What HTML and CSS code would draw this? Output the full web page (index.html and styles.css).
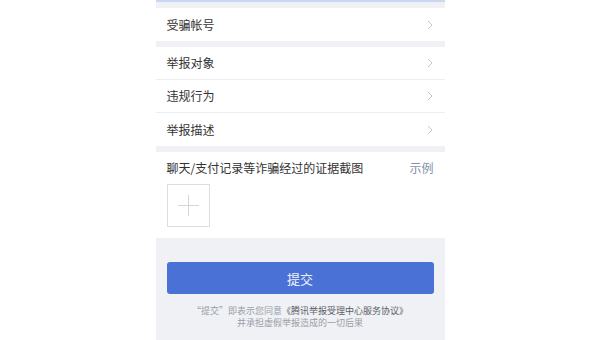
FILE: index.html
```html
<!DOCTYPE html>
<html lang="zh-CN">
<head>
<meta charset="utf-8">
<title>举报</title>
<link rel="stylesheet" href="styles.css">
</head>
<body>
<div class="phone">
  <div class="topline"></div>
  <div class="group first">
    <div class="row"><span class="label">受骗帐号</span><svg class="chev" width="6" height="10" viewBox="0 0 6 10"><polyline points="1,1 5,5 1,9" fill="none" stroke="#c4c6cc" stroke-width="1"/></svg></div>
  </div>
  <div class="group">
    <div class="row"><span class="label">举报对象</span><svg class="chev" width="6" height="10" viewBox="0 0 6 10"><polyline points="1,1 5,5 1,9" fill="none" stroke="#c4c6cc" stroke-width="1"/></svg></div>
    <div class="row"><span class="label">违规行为</span><svg class="chev" width="6" height="10" viewBox="0 0 6 10"><polyline points="1,1 5,5 1,9" fill="none" stroke="#c4c6cc" stroke-width="1"/></svg></div>
    <div class="row last"><span class="label">举报描述</span><svg class="chev" width="6" height="10" viewBox="0 0 6 10"><polyline points="1,1 5,5 1,9" fill="none" stroke="#c4c6cc" stroke-width="1"/></svg></div>
  </div>
  <div class="group evidence">
    <div class="ev-head"><span class="label">聊天/支付记录等诈骗经过的证据截图</span><span class="example">示例</span></div>
    <div class="upload">
      <svg width="25" height="25" viewBox="0 0 25 25"><line x1="12.5" y1="2" x2="12.5" y2="23" stroke="#d4d6da" stroke-width="1"/><line x1="2" y1="12.5" x2="23" y2="12.5" stroke="#d4d6da" stroke-width="1"/></svg>
    </div>
  </div>
  <div class="actions">
    <button class="submit">提交</button>
    <p class="note">“提交”即表示您同意<span class="agree">《腾讯举报受理中心服务协议》</span><br>并承担虚假举报造成的一切后果</p>
  </div>
</div>
</body>
</html>
```

FILE: styles.css
```css
html, body {
  margin: 0;
  padding: 0;
  background: #ffffff;
}
body {
  font-family: "Noto Sans CJK SC", "Noto Sans", sans-serif;
  color: #333;
}
.phone {
  width: 289px;
  height: 340px;
  margin: 0 auto;
  background: #eff1f5;
  overflow: hidden;
}
.topline {
  height: 2px;
  background: #c9d8f2;
}
.group {
  background: #fff;
  margin-top: 6px;
}
.row {
  height: 32px;
  display: flex;
  align-items: center;
  justify-content: space-between;
  padding: 0 12px 0 11px;
  border-bottom: 1px solid #eceef1;
}
.group.first .row {
  height: 33px;
  border-bottom: none;
}
.row.last {
  border-bottom: none;
  height: 33px;
}
.label {
  font-size: 12px;
  color: #333;
  line-height: 1;
}
.chev {
  display: block;
}
.evidence {
  padding: 9px 11px 11px;
  height: 66px;
}
.ev-head {
  display: flex;
  justify-content: space-between;
  align-items: center;
  height: 14px;
}
.example {
  font-size: 12px;
  color: #7f8fa8;
  line-height: 1;
}
.upload {
  margin-top: 9px;
  width: 41px;
  height: 41px;
  border: 1px solid #dcdee2;
  display: flex;
  align-items: center;
  justify-content: center;
}
.actions {
  padding: 24px 11px 0;
}
.submit {
  display: block;
  width: 100%;
  height: 32px;
  border: none;
  border-radius: 3px;
  background: #4a72d6;
  color: #eef2fb;
  font-family: "Noto Sans CJK SC", sans-serif;
  font-size: 13px;
  padding: 0;
}
.note {
  margin: 11px 0 0;
  text-align: center;
  font-size: 9px;
  line-height: 12px;
  color: #9a9ea6;
}
.agree {
  color: #5c6068;
}
```
